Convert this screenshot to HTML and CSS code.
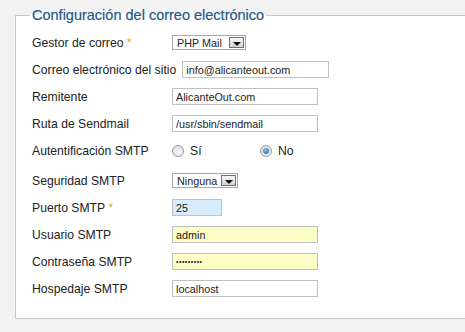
FILE: index.html
```html
<!DOCTYPE html>
<html lang="es">
<head>
    <meta charset="UTF-8">
    <meta name="viewport" content="width=device-width, initial-scale=1.0">
    <title>Configuración del correo electrónico</title>
    <link rel="stylesheet" href="styles.css">
</head>
<body>

<fieldset class="mail-settings">
    <legend>Configuración del correo electrónico</legend>

    <div class="row">
        <label>Gestor de correo <span class="req">*</span></label>
        <div class="select select-mailer"><span>PHP Mail</span><span class="arrow"></span></div>
    </div>

    <div class="row">
        <label>Correo electrónico del sitio</label>
        <input class="field field-email" type="text" value="info@alicanteout.com">
    </div>

    <div class="row">
        <label>Remitente</label>
        <input class="field field-long" type="text" value="AlicanteOut.com">
    </div>

    <div class="row">
        <label>Ruta de Sendmail</label>
        <input class="field field-long" type="text" value="/usr/sbin/sendmail">
    </div>

    <div class="row">
        <label>Autentificación SMTP</label>
        <div class="option"><span class="radio"></span><span>Sí</span></div>
        <div class="option"><span class="radio checked"></span><span>No</span></div>
    </div>

    <div class="row row-gap">
        <label>Seguridad SMTP</label>
        <div class="select select-security"><span>Ninguna</span><span class="arrow"></span></div>
    </div>

    <div class="row">
        <label>Puerto SMTP <span class="req">*</span></label>
        <input class="field field-short field-focus" type="text" value="25">
    </div>

    <div class="row">
        <label>Usuario SMTP</label>
        <input class="field field-long field-filled" type="text" value="admin">
    </div>

    <div class="row">
        <label>Contraseña SMTP</label>
        <input class="field field-long field-filled field-secret" type="password" value="secretpas">
    </div>

    <div class="row">
        <label>Hospedaje SMTP</label>
        <input class="field field-long" type="text" value="localhost">
    </div>
</fieldset>

</body>
</html>
```

FILE: styles.css
```css
body {
    font-family: "Liberation Sans", Arial, sans-serif;
    background-color: #f2f2f2;
    color: #222;
    margin: 0;
    padding: 0;
    overflow: hidden;
}

.mail-settings {
    margin: 7px -20px 0 15px;
    padding: 6px 0 16px 16px;
    border: 1px solid #c8c8c8;
    background-color: #fff;
}

legend {
    padding: 0 2px;
    margin-left: -2px;
    font-size: 14.5px;
    line-height: 16px;
    color: #285888;
    -webkit-text-stroke: 0.2px #285888;
}

.row {
    display: flex;
    align-items: center;
    height: 27px;
    font-size: 12.2px;
}

.row-gap {
    margin-top: 3px;
}

label {
    min-width: 134px;
    padding-right: 6px;
    white-space: nowrap;
}

.req {
    color: #f0a030;
}

.field {
    height: 17px;
    box-sizing: border-box;
    padding: 0 3px;
    margin: 0;
    border: 1px solid #c0c0c0;
    background-color: #fff;
    font-family: "Liberation Sans", Arial, sans-serif;
    font-size: 10.8px;
    color: #222;
    outline: none;
}

.field-long {
    width: 146px;
}

.field-email {
    width: 147px;
}

.field-short {
    width: 50px;
}

.field-focus {
    background-color: #d6ebfb;
}

.field-filled {
    background-color: #fdfdc6;
}

.field-secret {
    font-size: 7px;
    letter-spacing: 0.5px;
}

.select {
    display: flex;
    align-items: center;
    height: 15px;
    box-sizing: border-box;
    padding: 0 1px 0 4px;
    border: 1px solid #a8a8a8;
    background-color: #fff;
    font-size: 10.8px;
    color: #222;
}

.select-mailer {
    width: 74px;
}

.select-security {
    width: 66px;
}

.arrow {
    display: flex;
    justify-content: center;
    align-items: center;
    margin-left: auto;
    width: 15px;
    height: 11px;
    box-sizing: border-box;
    border: 1px solid #707070;
    background-image: linear-gradient(#f6f6f6, #d2d2d2);
}

.arrow::after {
    content: "";
    margin-top: 2px;
    border-top: 4px solid #111;
    border-left: 4px solid transparent;
    border-right: 4px solid transparent;
}

.option {
    display: flex;
    align-items: center;
    gap: 6px;
    width: 88px;
}

.radio {
    display: flex;
    justify-content: center;
    align-items: center;
    width: 12px;
    height: 12px;
    box-sizing: border-box;
    border: 1px solid #9a9a9a;
    border-radius: 50%;
    background-image: radial-gradient(circle at 60% 65%, #f8f8f8, #d8d8d8);
}

.radio.checked::after {
    content: "";
    width: 6px;
    height: 6px;
    border-radius: 50%;
    background-image: radial-gradient(circle at 40% 35%, #7fc0f0, #1a5fa8);
}
```
